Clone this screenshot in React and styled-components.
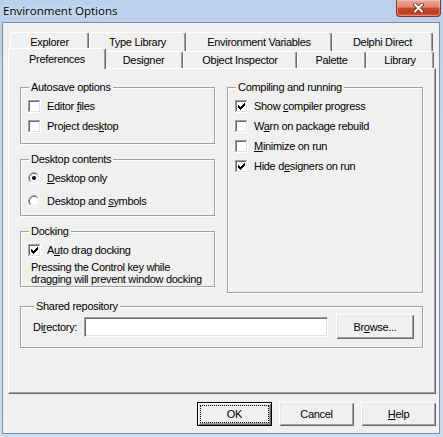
import React from 'react';
import styled, { createGlobalStyle } from 'styled-components';

const GlobalStyle = createGlobalStyle`
  html, body { margin: 0; padding: 0; background: #c2d6ee; }
  body { font-family: "Liberation Sans", Arial, sans-serif; }
`;

const Window = styled.div`
  box-sizing: border-box;
  width: 443px;
  height: 437px;
  display: flex;
  flex-direction: column;
  padding: 0 3px 3px 2px;
  background: linear-gradient(to bottom, #b9d1ec 0%, #c4d8ef 40%, #c9dcf1 100%);
`;

const TitleBar = styled.div`
  height: 22px;
  flex: none;
  display: flex;
  align-items: flex-start;
  justify-content: space-between;
`;

const Title = styled.div`
  font-family: "Open Sans", "Noto Sans", sans-serif;
  font-size: 11.5px;
  line-height: 21px;
  padding-left: 1px;
  color: #000;
  text-shadow: 0 0 6px rgba(255, 255, 255, 0.9);
`;

const CloseButton = styled.div`
  box-sizing: border-box;
  width: 45px;
  height: 17px;
  margin-right: -1px;
  border: 1px solid #8a3324;
  border-top: none;
  border-radius: 0 0 4px 4px;
  background: linear-gradient(to bottom, #eaa899 0%, #dc8a77 42%, #c9492c 52%, #bf3b1f 78%, #d15a3c 100%);
  box-shadow: inset 0 0 0 1px rgba(255, 225, 215, 0.4);
  display: flex;
  align-items: center;
  justify-content: center;
`;

const Client = styled.div`
  flex: 1;
  display: flex;
  flex-direction: column;
  background: #f0f0f0;
  border: 1px solid #7f8fa3;
  padding: 9px 3px 7px 5px;
  font-size: 11px;
  letter-spacing: -0.3px;
  color: #000;
`;

const Tabs = styled.div`
  display: flex;
  flex-direction: column;
`;

const TabRow = styled.div`
  display: flex;
  height: ${p => p.$h}px;
  padding-left: 2px;
`;

const Tab = styled.div`
  box-sizing: border-box;
  flex: none;
  position: relative;
  z-index: ${p => (p.$active ? 1 : 0)};
  width: ${p => p.$w + (p.$active ? 4 : 0)}px;
  height: ${p => (p.$active ? 'calc(100% + 4px)' : '100%')};
  margin: ${p => (p.$active ? '-3px -2px -1px' : '0')};
  padding-bottom: ${p => (p.$active ? 1 : 0)}px;
  background: #f0f0f0;
  border: 1px solid;
  border-bottom: none;
  border-color: #fff #696969 transparent #fff;
  border-radius: 3px 3px 0 0;
  box-shadow: inset -1px 0 0 #a0a0a0;
  display: flex;
  align-items: center;
  justify-content: center;
  white-space: nowrap;
`;

const Panel = styled.div`
  box-sizing: border-box;
  height: 326px;
  border: 1px solid;
  border-color: #fff #696969 #696969 #fff;
  box-shadow: inset -1px -1px 0 #a0a0a0;
  padding: 12px 0 0 11px;
  display: grid;
  grid-template-columns: 195px 196px;
  column-gap: 12px;
  row-gap: 7px;
  align-content: start;
  align-items: start;
`;

const Column = styled.div`
  display: flex;
  flex-direction: column;
  gap: 9px;
`;

const GroupBox = styled.fieldset`
  box-sizing: border-box;
  margin: 0;
  min-width: 0;
  padding: ${p => p.$pt ?? 2}px ${p => p.$pr ?? 8}px ${p => p.$pb ?? 6}px ${p => p.$pl ?? 7}px;
  border: 1px solid #a0a0a0;
  box-shadow: inset 1px 1px 0 #fff, 1px 1px 0 #fff;
  ${p => (p.$height ? `height: ${p.$height}px;` : '')}
  ${p => (p.$span ? 'grid-column: 1 / -1;' : '')}
  display: flex;
  flex-direction: column;
  gap: ${p => p.$gap ?? 0}px;
`;

const Caption = styled.legend`
  padding: 0 2px;
  margin-left: 1px;
  line-height: 13px;
  height: 13px;
  background: #f0f0f0;
`;

const OptionRow = styled.label`
  display: flex;
  align-items: center;
  height: 20px;
  gap: 6px;
  white-space: nowrap;
`;

const Mn = styled.span`
  text-decoration: underline;
  text-underline-offset: 1px;
`;

const Note = styled.div`
  margin: 1px 0 0 3px;
  line-height: 12px;
`;

const FieldRow = styled.div`
  display: flex;
  align-items: center;
  height: 25px;
`;

const FieldLabel = styled.span`
  flex: none;
  width: 51px;
  white-space: nowrap;
`;

const TextInput = styled.input`
  box-sizing: border-box;
  flex: none;
  width: 244px;
  height: 20px;
  margin: 0;
  padding: 0 3px;
  border: 1px solid;
  border-color: #a0a0a0 #fff #fff #a0a0a0;
  box-shadow: inset 1px 1px 0 #696969, inset -1px -1px 0 #e3e3e3;
  background: #fff;
  outline: none;
  font: inherit;
`;

const Button = styled.div`
  box-sizing: border-box;
  position: relative;
  flex: none;
  width: ${p => p.$w}px;
  height: ${p => p.$h}px;
  margin-left: ${p => p.$ml ?? 0}px;
  display: flex;
  align-items: center;
  justify-content: center;
  white-space: nowrap;
  background: #f0f0f0;
  border: ${p => (p.$default ? '1px solid #000' : 'none')};
  box-shadow: inset 1px 1px 0 #fff, inset -1px -1px 0 #696969, inset 2px 2px 0 #e3e3e3, inset -2px -2px 0 #a0a0a0;
  ${p =>
    p.$default &&
    `
    &::after {
      content: '';
      position: absolute;
      top: 2px; left: 2px; right: 2px; bottom: 2px;
      border: 1px dotted #000;
    }
  `}
`;

const ButtonBar = styled.div`
  display: flex;
  justify-content: flex-end;
  gap: 7px;
  margin-top: 8px;
`;

function CheckBox({ checked }) {
  return (
    <svg width="13" height="13" viewBox="0 0 13 13" shapeRendering="crispEdges" style={{ flex: 'none' }}>
      <rect x="0" y="0" width="13" height="13" fill="#fff" />
      <rect x="0" y="0" width="12" height="1" fill="#a0a0a0" />
      <rect x="0" y="0" width="1" height="12" fill="#a0a0a0" />
      <rect x="1" y="1" width="10" height="1" fill="#696969" />
      <rect x="1" y="1" width="1" height="10" fill="#696969" />
      <rect x="1" y="11" width="11" height="1" fill="#e3e3e3" />
      <rect x="11" y="1" width="1" height="11" fill="#e3e3e3" />
      {checked && (
        <path
          d="M3 5h1v3h-1z M4 6h1v3h-1z M5 7h1v3h-1z M6 6h1v3h-1z M7 5h1v3h-1z M8 4h1v3h-1z M9 3h1v3h-1z"
          fill="#000"
        />
      )}
    </svg>
  );
}

function Radio({ checked }) {
  return (
    <svg width="13" height="12" viewBox="0 0 13 12" style={{ flex: 'none' }}>
      <circle cx="6" cy="6" r="4.6" fill="#fff" />
      <path d="M2.11 9.89 A5.5 5.5 0 0 1 9.89 2.11" fill="none" stroke="#a0a0a0" strokeWidth="1" />
      <path d="M9.89 2.11 A5.5 5.5 0 0 1 2.11 9.89" fill="none" stroke="#ffffff" strokeWidth="1" />
      <path d="M2.82 9.18 A4.5 4.5 0 0 1 9.18 2.82" fill="none" stroke="#696969" strokeWidth="1" />
      <path d="M9.18 2.82 A4.5 4.5 0 0 1 2.82 9.18" fill="none" stroke="#e3e3e3" strokeWidth="1" />
      {checked && <circle cx="6" cy="6" r="2" fill="#000" />}
    </svg>
  );
}

const row1 = [
  { label: 'Explorer', w: 79 },
  { label: 'Type Library', w: 97 },
  { label: 'Environment Variables', w: 146 },
  { label: 'Delphi Direct', w: 101 },
];

const row2 = [
  { label: 'Preferences', w: 94, active: true },
  { label: 'Designer', w: 79 },
  { label: 'Object Inspector', w: 114 },
  { label: 'Palette', w: 69 },
  { label: 'Library', w: 68 },
];

export default function App() {
  return (
    <>
      <GlobalStyle />
      <Window>
        <TitleBar>
          <Title>Environment Options</Title>
          <CloseButton>
            <svg width="11" height="10" viewBox="0 0 11 10">
              <path d="M2 1.5 L9 8.5 M9 1.5 L2 8.5" stroke="#5a1a0e" strokeWidth="3.6" strokeLinecap="square" />
              <path d="M2 1.5 L9 8.5 M9 1.5 L2 8.5" stroke="#fff" strokeWidth="2" strokeLinecap="square" />
            </svg>
          </CloseButton>
        </TitleBar>
        <Client>
          <Tabs>
            <TabRow $h={19}>
              {row1.map(t => (
                <Tab key={t.label} $w={t.w}>{t.label}</Tab>
              ))}
            </TabRow>
            <TabRow $h={17}>
              {row2.map(t => (
                <Tab key={t.label} $w={t.w} $active={t.active}>{t.label}</Tab>
              ))}
            </TabRow>
          </Tabs>
          <Panel>
            <Column>
              <GroupBox $pb={7}>
                <Caption>Autosave options</Caption>
                <OptionRow><CheckBox /><span>Editor <Mn>f</Mn>iles</span></OptionRow>
                <OptionRow><CheckBox /><span>Project des<Mn>k</Mn>top</span></OptionRow>
              </GroupBox>
              <GroupBox $gap={3} $pb={4}>
                <Caption>Desktop contents</Caption>
                <OptionRow><Radio checked /><span><Mn>D</Mn>esktop only</span></OptionRow>
                <OptionRow><Radio /><span>Desktop and <Mn>s</Mn>ymbols</span></OptionRow>
              </GroupBox>
              <GroupBox $pb={1}>
                <Caption>Docking</Caption>
                <OptionRow><CheckBox checked /><span>A<Mn>u</Mn>to drag docking</span></OptionRow>
                <Note>
                  Pressing the Control key while
                  <br />
                  dragging will prevent window docking
                </Note>
              </GroupBox>
            </Column>
            <Column>
              <GroupBox $height={212}>
                <Caption>Compiling and running</Caption>
                <OptionRow><CheckBox checked /><span>Show <Mn>c</Mn>ompiler progress</span></OptionRow>
                <OptionRow><CheckBox /><span>W<Mn>a</Mn>rn on package rebuild</span></OptionRow>
                <OptionRow><CheckBox /><span><Mn>M</Mn>inimize on run</span></OptionRow>
                <OptionRow><CheckBox checked /><span>Hide d<Mn>e</Mn>signers on run</span></OptionRow>
              </GroupBox>
            </Column>
            <GroupBox $span $pt={1} $pb={8} $pl={12} $pr={8}>
              <Caption>Shared repository</Caption>
              <FieldRow>
                <FieldLabel>Di<Mn>r</Mn>ectory:</FieldLabel>
                <TextInput type="text" readOnly value="" />
                <Button $w={78} $h={25} $ml={8}><span>Br<Mn>o</Mn>wse...</span></Button>
              </FieldRow>
            </GroupBox>
          </Panel>
          <ButtonBar>
            <Button $w={75} $h={24} $default>OK</Button>
            <Button $w={75} $h={24}>Cancel</Button>
            <Button $w={75} $h={24}><span><Mn>H</Mn>elp</span></Button>
          </ButtonBar>
        </Client>
      </Window>
    </>
  );
}
